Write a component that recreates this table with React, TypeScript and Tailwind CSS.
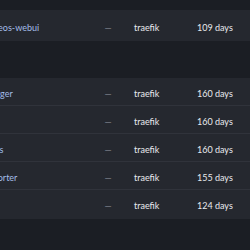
const services = [
  { name: 'media-blogger', router: 'traefik', age: '160 days' },
  { name: 'grafana', router: 'traefik', age: '160 days' },
  { name: 'prometheus', router: 'traefik', age: '160 days' },
  { name: 'pihole-exporter', router: 'traefik', age: '155 days' },
  { name: 'loki', router: 'traefik', age: '124 days' },
]

function Row({ name, router, age, tall }: { name: string; router: string; age: string; tall?: boolean }) {
  return (
    <div className={`flex items-center ${tall ? 'h-[31px] pt-[5px]' : 'h-[28px] pt-[4px]'}`}>
      <div className="w-[139px] pl-[2px] whitespace-nowrap text-[#a3bde9]">{name}</div>
      <div className="w-[30px] text-center text-[#80858f]">—</div>
      <div className="w-[74px] pl-[11px] text-[#e8eaee]">{router}</div>
      <div className="w-[60px] text-[#e8eaee]">{age}</div>
    </div>
  )
}

export default function App() {
  return (
    <div className="w-[250px] h-[250px] overflow-hidden bg-[#1b1e24] text-[9px]" style={{ fontFamily: 'Lato, "Noto Sans", sans-serif' }}>
      <div className="-ml-[46px] w-[303px] pt-[10px]">
        <div className="bg-[#25282f]">
          <Row name="home-vvideos-webui" router="traefik" age="109 days" tall />
        </div>
        <div className="h-[37px]" />
        <div className="bg-[#25282f] divide-y divide-[#30333b] border-b border-[#25282f]">
          {services.map((s) => (
            <Row key={s.name} {...s} />
          ))}
        </div>
      </div>
    </div>
  )
}
